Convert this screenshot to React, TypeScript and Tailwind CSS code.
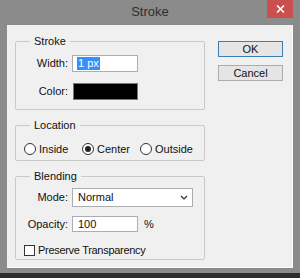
import React from "react";

const Radio = ({ label, checked = false }: { label: string; checked?: boolean }) => (
  <label className="flex items-center gap-[3px]">
    <span className="w-[12px] h-[12px] rounded-full border border-[#333] bg-white flex items-center justify-center">
      {checked && <span className="w-[6px] h-[6px] rounded-full bg-[#222]" />}
    </span>
    <span>{label}</span>
  </label>
);

const Group = ({
  title,
  className,
  children,
}: {
  title: string;
  className: string;
  children: React.ReactNode;
}) => (
  <fieldset className={`border border-[#c9c9c9] rounded-[2px] px-0 ${className}`}>
    <legend className="ml-[14px] px-[4px] leading-[14px]">{title}</legend>
    {children}
  </fieldset>
);

export default function App() {
  return (
    <div className="w-[300px] h-[278px] bg-[#8b8b8b] flex flex-col font-['Liberation_Sans',Arial,sans-serif] text-[11px] text-[#111]">
      <div className="relative h-[25px] flex items-center justify-center">
        <span className="text-[13px] text-[#2e2e2e] pb-[1px]">Stroke</span>
        <div className="absolute right-[7px] top-0 w-[26px] h-[18px] bg-[#c9504f] flex items-center justify-center">
          <svg width="9" height="8" viewBox="0 0 9 8">
            <path d="M1 0.5 L8 7.5 M8 0.5 L1 7.5" stroke="#fff" strokeWidth="1.6" />
          </svg>
        </div>
      </div>

      <div className="mx-[7px] h-[243px] bg-[#f0f0f0] border-r border-b border-[#fafafa] flex pl-[8px] pt-[9px]">
        <div className="w-[190px] flex flex-col gap-[8px]">
          <Group title="Stroke" className="h-[76px]">
            <div className="flex flex-col gap-[11px] pt-[7px]">
              <div className="flex items-center h-[17px]">
                <span className="w-[52px] text-right">Width:</span>
                <div className="ml-[4px] w-[66px] h-[17px] bg-white border border-[#abadb3] flex items-center pl-[4px]">
                  <span className="bg-[#3390ff] text-white leading-[13px] px-[1px]">1 px</span>
                </div>
              </div>
              <div className="flex items-center h-[17px]">
                <span className="w-[52px] text-right">Color:</span>
                <div className="ml-[5px] w-[65px] h-[17px] bg-black border border-[#777]" />
              </div>
            </div>
          </Group>

          <Group title="Location" className="h-[43px]">
            <div className="flex items-center pl-[8px] pt-[9px]">
              <div className="w-[58px]"><Radio label="Inside" /></div>
              <div className="w-[58px]"><Radio label="Center" checked /></div>
              <Radio label="Outside" />
            </div>
          </Group>

          <Group title="Blending" className="h-[91px]">
            <div className="flex flex-col pt-[5px]">
              <div className="flex items-center h-[19px]">
                <span className="w-[52px] text-right">Mode:</span>
                <div className="ml-[4px] w-[121px] h-[19px] bg-white border border-[#abadb3] flex items-center justify-between pl-[5px] pr-[4px]">
                  <span>Normal</span>
                  <svg width="8" height="5" viewBox="0 0 8 5">
                    <path d="M1 1 L4 4 L7 1" stroke="#333" strokeWidth="1.2" fill="none" />
                  </svg>
                </div>
              </div>
              <div className="flex items-center h-[16px] mt-[9px]">
                <span className="w-[52px] text-right">Opacity:</span>
                <div className="ml-[4px] w-[66px] h-[16px] bg-white border border-[#abadb3] flex items-center pl-[5px]">
                  100
                </div>
                <span className="ml-[6px]">%</span>
              </div>
              <label className="flex items-center mt-[10px] pl-[8px] gap-[3px]">
                <span className="w-[11px] h-[11px] bg-white border border-[#333]" />
                <span className="tracking-[-0.3px]">Preserve Transparency</span>
              </label>
            </div>
          </Group>
        </div>

        <div className="ml-[13px] pt-[7px] flex flex-col gap-[8px]">
          <button className="w-[65px] h-[16px] bg-[#e5e5e5] border border-[#3c7fb1] flex items-center justify-center leading-none">
            OK
          </button>
          <button className="w-[65px] h-[16px] bg-[#e5e5e5] border border-[#acacac] flex items-center justify-center leading-none">
            Cancel
          </button>
        </div>
      </div>

      <div className="h-[5px]" />
      <div className="flex-1 bg-[#2e2e2e]" />
    </div>
  );
}
